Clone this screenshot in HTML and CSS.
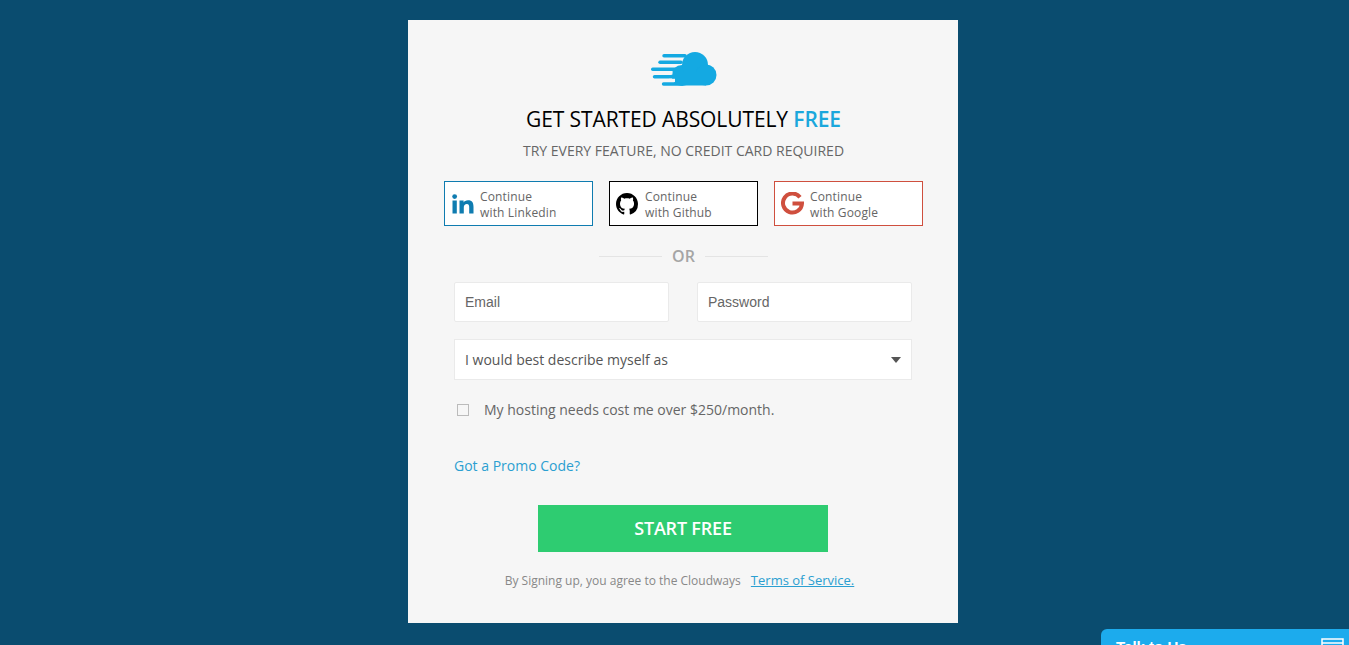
FILE: index.html
```html
<!DOCTYPE html>
<html lang="en">
<head>
    <meta charset="UTF-8">
    <title>Start Free</title>
    <link rel="stylesheet" href="styles.css">
</head>
<body>
    <div class="card">
        <svg class="logo" width="66" height="36" viewBox="0 0 66 36">
            <g stroke="#14a9e2" stroke-width="3.400" stroke-linecap="round">
                <line x1="13" y1="3.700" x2="34" y2="3.700"/>
                <line x1="9" y1="10.300" x2="30" y2="10.300"/>
                <line x1="1.700" y1="17.300" x2="26" y2="17.300"/>
                <line x1="3.500" y1="24.700" x2="26" y2="24.700"/>
                <line x1="12.500" y1="32" x2="30" y2="32"/>
            </g>
            <g fill="#14a9e2">
                <circle cx="31" cy="23.500" r="10.500"/>
                <circle cx="44" cy="13" r="13"/>
                <circle cx="55" cy="23" r="10.500"/>
                <rect x="31" y="20" width="24" height="13.500"/>
            </g>
            <g stroke="#f6f6f6" stroke-width="3.200">
                <line x1="18" y1="28.400" x2="24" y2="28.400"/>
                <line x1="20" y1="21" x2="21.500" y2="21"/>
            </g>
        </svg>
        <h1 class="title">GET STARTED ABSOLUTELY <span class="title-free">FREE</span></h1>
        <p class="subtitle">TRY EVERY FEATURE, NO CREDIT CARD REQUIRED</p>

        <div class="social">
            <a class="social-btn social-btn--linkedin">
                <svg class="social-icon" width="22" height="20" viewBox="0 0 22 20">
                    <path fill="#0f7cb0" d="M0.500 6.500h4.300v13h-4.300z"/>
                    <circle fill="#0f7cb0" cx="2.650" cy="2.600" r="2.400"/>
                    <path fill="#0f7cb0" d="M7.500 6.500h4.100v1.900c.7-1.200 2.300-2.200 4.400-2.200 4.300 0 5.500 2.700 5.500 6.500v6.800h-4.300v-6.100c0-1.900-.4-3.400-2.300-3.400-2 0-3.100 1.300-3.100 3.400v6.100h-4.300z"/>
                </svg>
                <span class="social-text">Continue<br>with Linkedin</span>
            </a>
            <a class="social-btn social-btn--github">
                <svg class="social-icon" width="22" height="22" viewBox="0 0 16 16">
                    <path fill="#000" d="M8 0C3.580 0 0 3.580 0 8c0 3.540 2.290 6.530 5.470 7.590.4.070.55-.17.55-.38 0-.19-.01-.82-.01-1.490-2.010.37-2.530-.49-2.690-.94-.09-.23-.48-.94-.82-1.130-.28-.15-.68-.52-.01-.53.630-.01 1.080.58 1.230.82.720 1.210 1.870.870 2.330.660.070-.520.280-.870.510-1.070-1.780-.2-3.640-.890-3.640-3.950 0-.870.310-1.590.820-2.150-.080-.2-.360-1.020.080-2.120 0 0 .670-.210 2.200.820.640-.180 1.320-.270 2-.270s1.360.090 2 .270c1.530-1.040 2.200-.820 2.200-.820.440 1.100.160 1.920.080 2.120.510.560.820 1.270.820 2.150 0 3.070-1.870 3.750-3.650 3.950.290.250.540.730.540 1.480 0 1.070-.010 1.930-.010 2.200 0 .210.150.460.550.380A8.010 8.010 0 0 0 16 8c0-4.420-3.580-8-8-8z"/>
                </svg>
                <span class="social-text">Continue<br>with Github</span>
            </a>
            <a class="social-btn social-btn--google">
                <svg class="social-icon" width="23" height="23" viewBox="0 0 23 23">
                    <path fill="none" stroke="#cf4f3e" stroke-width="4" d="M19 5.200a9.500 9.500 0 1 0 2 6.300h-9.500"/>
                </svg>
                <span class="social-text">Continue<br>with Google</span>
            </a>
        </div>

        <div class="divider"><span class="divider-line"></span><span class="divider-text">OR</span><span class="divider-line"></span></div>

        <form class="form">
            <div class="form-row">
                <input class="field" type="text" placeholder="Email">
                <input class="field" type="password" placeholder="Password">
            </div>
            <div class="select">
                <span>I would best describe myself as</span>
                <span class="select-arrow"></span>
            </div>
            <label class="check">
                <span class="check-box"></span>
                <span>My hosting needs cost me over $250/month.</span>
            </label>
            <a class="promo">Got a Promo Code?</a>
            <button class="submit" type="button">START FREE</button>
        </form>
        <p class="terms">By Signing up, you agree to the Cloudways <a class="terms-link">Terms of Service.</a></p>
    </div>

    <div class="chat">
        <span class="chat-label">Talk to Us</span>
        <svg class="chat-icon" width="23" height="16" viewBox="0 0 23 16">
            <path fill="none" stroke="#fff" stroke-width="1.500" d="M1 1h21v14h-21zM1 5h21"/>
        </svg>
    </div>
</body>
</html>
```

FILE: styles.css
```css
html, body {
    height: 100%;
    overflow: hidden;
}
body {
    margin: 0;
    background-color: #0a4c6f;
    font-family: "Open Sans", Arial, sans-serif;
    color: #666;
}
.card {
    box-sizing: border-box;
    width: 550px;
    height: 603px;
    margin: 20px 0 0 408px;
    padding: 32px 35px 0 36px;
    background-color: #f6f6f6;
    display: flex;
    flex-direction: column;
    align-items: center;
}
.logo {
    display: block;
    margin-left: 1px;
}
.title {
    margin: 17px 0 0;
    font-size: 21px;
    line-height: 28px;
    font-weight: 400;
    color: #000;
    letter-spacing: -0.1px;
}
.title-free {
    color: #1ba7dc;
    font-weight: 600;
}
.subtitle {
    margin: 8px 0 0;
    font-size: 14px;
    line-height: 20px;
    color: #666;
}
.social {
    display: flex;
    gap: 16px;
    width: 479px;
    margin-top: 20px;
}
.social-btn {
    box-sizing: border-box;
    flex: 1;
    height: 45px;
    display: flex;
    align-items: center;
    border: 1px solid #0f7cb0;
    background-color: #fff;
    font-size: 12px;
    line-height: 16px;
    color: #666;
}
.social-btn--github { border-color: #000; }
.social-btn--google { border-color: #cf4f3e; }
.social-text {
    padding-top: 2px;
    letter-spacing: 0.15px;
}
.social-icon {
    flex: none;
    margin-left: 7px;
    margin-right: 6px;
}
.social-btn--github .social-icon { margin-left: 6px; margin-right: 7px; }
.social-btn--google .social-icon { margin-left: 6px; margin-right: 6px; }
.divider {
    display: flex;
    align-items: center;
    justify-content: center;
    gap: 10px;
    margin-top: 20px;
    height: 20px;
}
.divider-line {
    width: 63px;
    height: 1px;
    background-color: #e4e4e4;
}
.divider-text {
    font-size: 16px;
    font-weight: 600;
    color: #a5a5a5;
}
.form {
    box-sizing: border-box;
    width: 479px;
    padding: 0 11px 0 10px;
    display: flex;
    flex-direction: column;
    margin-top: 16px;
}
.form-row {
    display: flex;
    gap: 28px;
}
.field {
    box-sizing: border-box;
    flex: 1;
    min-width: 0;
    height: 40px;
    padding: 0 10px;
    border: 1px solid #eaeaea;
    border-radius: 2px;
    background-color: #fff;
    font-family: "Liberation Sans", Arial, sans-serif;
    font-size: 14px;
}
.field::placeholder {
    color: #666;
    opacity: 1;
}
.select {
    box-sizing: border-box;
    height: 41px;
    margin-top: 17px;
    padding: 0 10px;
    display: flex;
    align-items: center;
    justify-content: space-between;
    border: 1px solid #eaeaea;
    background-color: #fff;
    font-size: 14px;
    color: #555;
}
.select-arrow {
    width: 0;
    height: 0;
    border-left: 5px solid transparent;
    border-right: 5px solid transparent;
    border-top: 6px solid #555;
}
.check {
    display: flex;
    align-items: center;
    margin-top: 20px;
    padding-left: 3px;
    font-size: 14px;
    line-height: 20px;
    color: #666;
}
.check-box {
    box-sizing: border-box;
    width: 12px;
    height: 12px;
    margin-right: 15px;
    border: 1px solid #bbb;
    background-color: #f6f6f6;
}
.promo {
    margin-top: 36px;
    font-size: 14px;
    line-height: 20px;
    color: #2b9fd1;
}
.submit {
    width: 290px;
    height: 47px;
    margin: 29px 0 0 84px;
    padding-bottom: 2px;
    border: none;
    background-color: #2ecc71;
    color: #fff;
    font-family: "Open Sans", Arial, sans-serif;
    font-size: 18px;
    font-weight: 600;
    letter-spacing: -0.2px;
}
.terms {
    margin: 19px 8px 0 0;
    font-size: 12px;
    line-height: 18px;
    color: #888;
}
.terms-link {
    margin-left: 7px;
    font-size: 13px;
    color: #2b9fd1;
    text-decoration: underline;
}
.chat {
    position: fixed;
    left: 1101px;
    right: 0;
    top: 629px;
    height: 40px;
    border-radius: 6px 0 0 0;
    background-color: #1cabed;
    color: #fff;
}
.chat-label {
    position: absolute;
    left: 15px;
    top: 9px;
    font-family: "Liberation Sans", Arial, sans-serif;
    font-size: 15px;
    font-weight: 700;
}
.chat-icon {
    position: absolute;
    left: 220px;
    top: 9px;
}
```
